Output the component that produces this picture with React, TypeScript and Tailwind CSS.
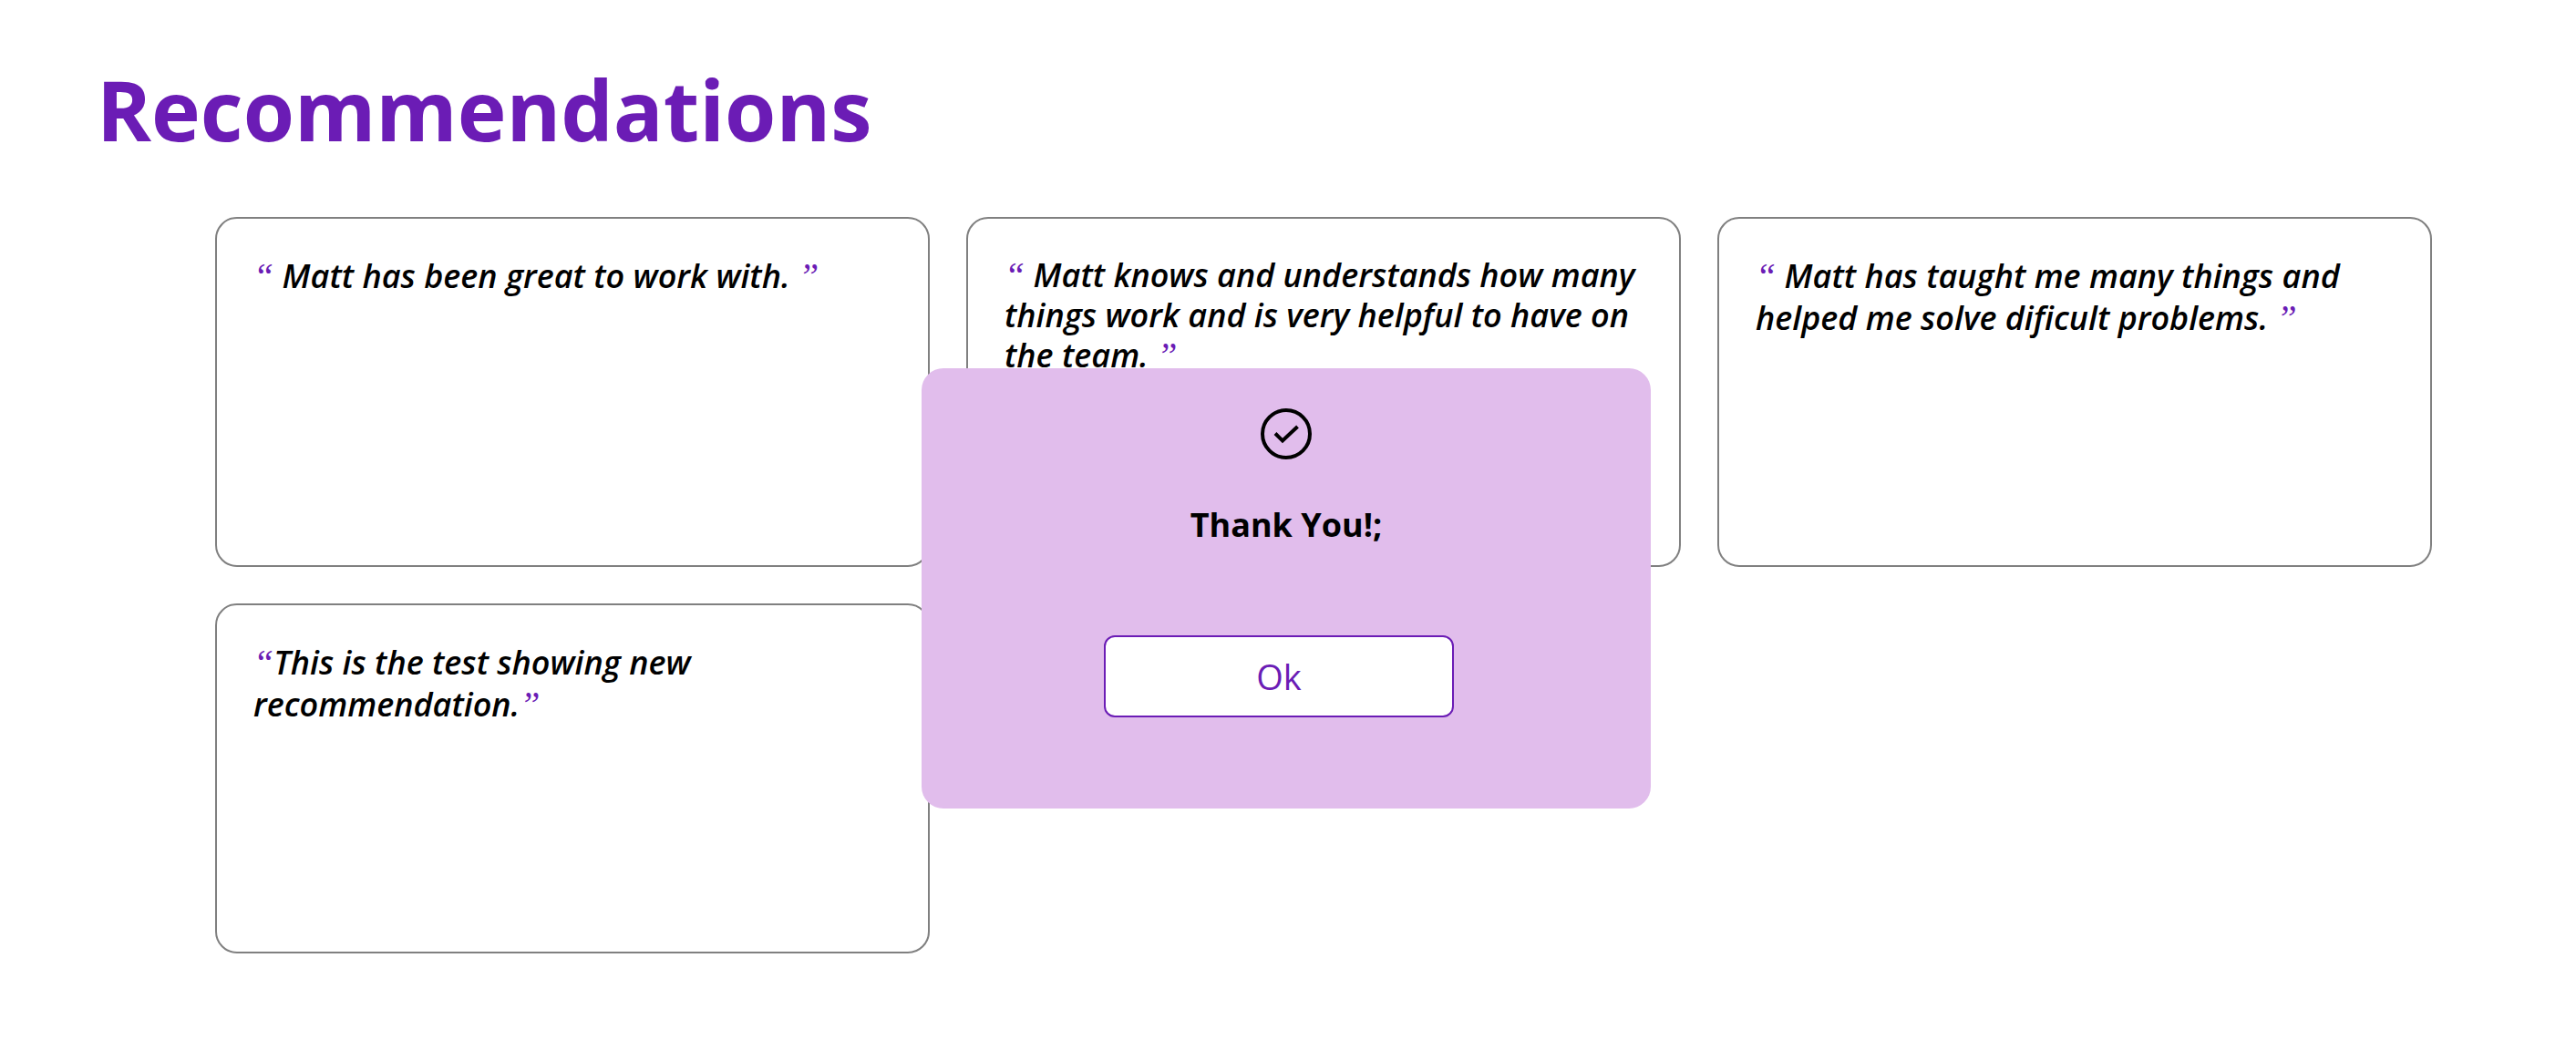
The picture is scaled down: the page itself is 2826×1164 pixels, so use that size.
import React, { useState } from "react";

type Recommendation = { text: string; spaced: boolean; tight?: boolean };

const recommendations: Recommendation[] = [
  { text: "Matt has been great to work with.", spaced: true },
  {
    text: "Matt knows and understands how many things work and is very helpful to have on the team.",
    spaced: true,
    tight: true,
  },
  {
    text: "Matt has taught me many things and helped me solve dificult problems.",
    spaced: true,
  },
  { text: "This is the test showing new recommendation.", spaced: false },
];

function Quote({ children }: { children: string }) {
  return (
    <span className="font-['Liberation_Serif',serif] text-[40px] leading-none font-normal text-[#6b1cb5]">
      {children}
    </span>
  );
}

function Card({ item }: { item: Recommendation }) {
  return (
    <li className="min-h-96 rounded-3xl border-2 border-[#808080] bg-white p-10">
      <p
        className={
          item.tight
            ? "text-4xl leading-[44px] font-semibold italic"
            : "text-4xl leading-[46px] font-semibold italic"
        }
      >
        <Quote>“</Quote>
        {item.spaced ? " " : ""}
        {item.text}
        {item.spaced ? "\u00a0" : ""}
        <Quote>”</Quote>
      </p>
    </li>
  );
}

function CheckCircle() {
  return (
    <svg
      className="size-14"
      viewBox="0 0 56 56"
      fill="none"
      stroke="currentColor"
      strokeWidth="4"
      aria-hidden="true"
    >
      <circle cx="28" cy="28" r="26" />
      <path d="M16 27.5 L24 35.5 L40.5 20" />
    </svg>
  );
}

export default function App() {
  const [open, setOpen] = useState(true);
  return (
    <main className="min-h-screen bg-white pt-[60px] pb-[118px] font-['Open_Sans',sans-serif] text-black">
      <h1 className="pl-[106px] text-[91px] leading-[120px] font-bold text-[#6b1cb5]">
        Recommendations
      </h1>
      <ul className="mt-[58px] mr-[158px] ml-[236px] grid grid-cols-3 gap-10">
        {recommendations.map((item) => (
          <Card key={item.text} item={item} />
        ))}
      </ul>
      {open && (
        <div className="pointer-events-none fixed inset-x-0 top-[404px] flex justify-center pr-1">
          <div
            role="dialog"
            aria-labelledby="thanks-title"
            className="pointer-events-auto flex w-[800px] flex-col items-center rounded-3xl bg-[#e1bdec] pt-11 pb-[100px]"
          >
            <CheckCircle />
            <h2 id="thanks-title" className="mt-10 text-4xl leading-[64px] font-bold">
              Thank You!;
            </h2>
            <button
              type="button"
              onClick={() => setOpen(false)}
              className="mt-[89px] mr-4 h-[90px] w-96 rounded-xl border-2 border-[#6b1cb5] bg-white text-[38px] leading-[52px] font-medium text-[#6b1cb5]"
            >
              Ok
            </button>
          </div>
        </div>
      )}
    </main>
  );
}
